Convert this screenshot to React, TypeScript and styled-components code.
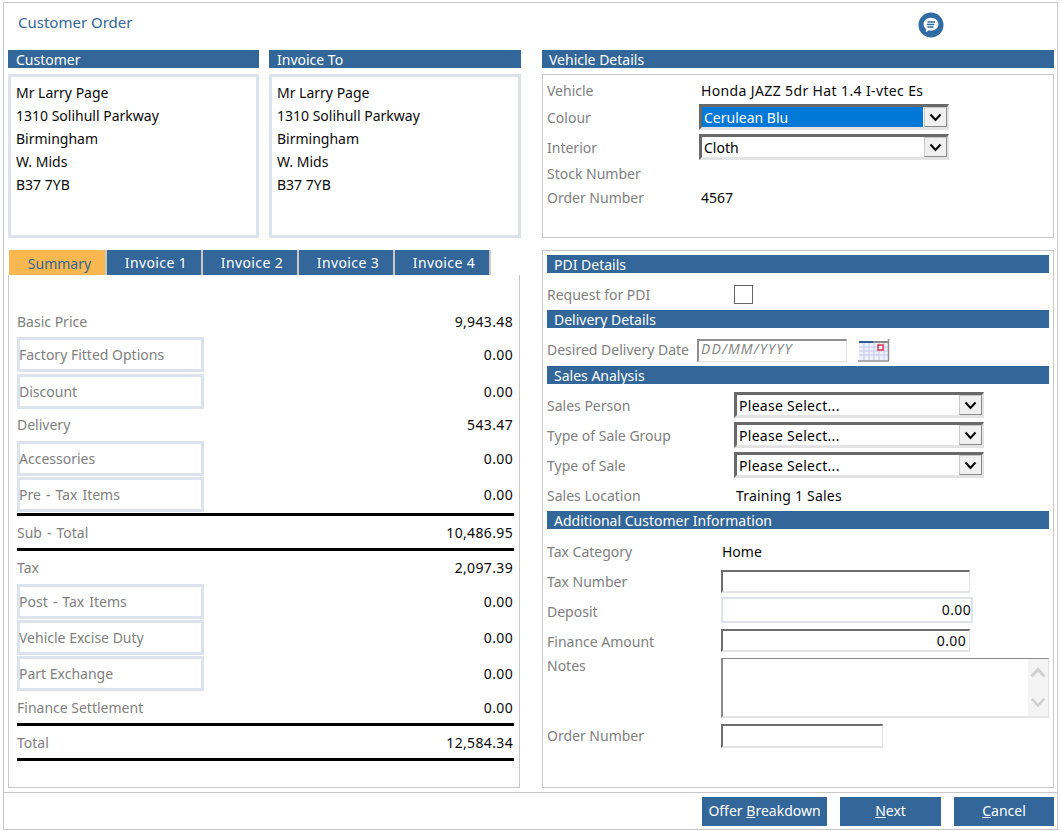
import React from "react";
import styled, { createGlobalStyle } from "styled-components";

const FONT = `"Noto Sans", "Open Sans", sans-serif`;
const BLUE = "#336699";
const LINE = "#c8c8c8";
const SOFT = "#dde3ee";
const INK = "#0a0a0a";
const MUTED = "#808080";

const Global = createGlobalStyle`
  html, body { margin: 0; padding: 0; background: #fff; }
  body { font-family: ${FONT}; font-size: 14px; color: ${INK}; }
`;

const Frame = styled.div`
  box-sizing: border-box;
  width: 1055px;
  height: 828px;
  margin: 2px 0 0 3px;
  border: 1px solid ${LINE};
  display: flex;
  flex-direction: column;
`;
const Header = styled.header`
  height: 47px;
  flex: none;
  display: flex;
  justify-content: space-between;
  padding: 9px 113px 0 14px;
  box-sizing: border-box;
`;
const Title = styled.h1`
  margin: 0;
  font-size: 15px;
  font-weight: 400;
  line-height: 20px;
  color: ${BLUE};
`;
const ChatIcon = styled.svg`
  width: 26px;
  height: 26px;
`;
const Main = styled.main`
  display: grid;
  grid-template-columns: 513px 512px;
  grid-template-rows: 188px 538px;
  column-gap: 21px;
  row-gap: 12px;
  padding-left: 4px;
`;
const AddressPair = styled.div`
  display: grid;
  grid-template-columns: 251px 252px;
  column-gap: 10px;
`;
const Bar = styled.div<{ $pad?: number }>`
  height: 18px;
  line-height: 20px;
  background: ${BLUE};
  color: #fff;
  padding-left: ${(p) => p.$pad ?? 7}px;
  font-size: 14px;
`;
const AddressBox = styled.div`
  box-sizing: border-box;
  height: 164px;
  margin-top: 6px;
  border: 3px solid ${SOFT};
  padding: 4px 5px;
  line-height: 23px;
`;
const Panel = styled.div`
  box-sizing: border-box;
  height: 164px;
  margin-top: 6px;
  border: 1px solid ${LINE};
  padding: 3px 4px 0;
`;
const Row = styled.div<{ $h: number; $mt?: number; $top?: boolean }>`
  display: flex;
  align-items: ${(p) => (p.$top ? "flex-start" : "center")};
  height: ${(p) => p.$h}px;
  margin-top: ${(p) => p.$mt ?? 0}px;
`;
const Label = styled.span<{ $col: number; $low?: boolean; $high?: boolean; $tight?: boolean }>`
  box-sizing: border-box;
  width: ${(p) => p.$col}px;
  flex: none;
  color: ${MUTED};
  white-space: nowrap;
  line-height: ${(p) => (p.$tight ? "15px" : "normal")};
  padding-top: ${(p) => (p.$low ? 2 : 0)}px;
  padding-bottom: ${(p) => (p.$high ? 2 : 0)}px;
`;
const Value = styled.span<{ $pad?: number; $track?: number; $raise?: boolean }>`
  padding-left: ${(p) => p.$pad ?? 0}px;
  padding-bottom: ${(p) => (p.$raise ? 2 : 0)}px;
  letter-spacing: ${(p) => p.$track ?? 0}px;
  white-space: nowrap;
`;
const SelectBox = styled.div<{ $w: number }>`
  box-sizing: border-box;
  width: ${(p) => p.$w}px;
  height: 26px;
  display: flex;
  align-items: stretch;
  border-style: solid;
  border-width: 3px 2px 3px 3px;
  border-color: #696969 #e3e3e3 #e3e3e3 #696969;
`;
const SelectText = styled.span<{ $on?: boolean; $track?: number }>`
  flex: 1;
  line-height: 22px;
  height: 20px;
  padding-left: 2px;
  margin: 0 1px 0 0;
  letter-spacing: ${(p) => p.$track ?? 0}px;
  background: ${(p) => (p.$on ? "#0078d7" : "#fff")};
  color: ${(p) => (p.$on ? "#fff" : "#000")};
`;
const SelectArrow = styled.span`
  box-sizing: border-box;
  width: 23px;
  flex: none;
  display: flex;
  align-items: center;
  justify-content: center;
  background: #f0f0f0;
  border: 1px solid #8a8a8a;
  border-top-color: #c8c8c8;
  border-left-color: #c8c8c8;
`;
const Tabs = styled.nav`
  height: 25px;
  display: flex;
  margin-left: 1px;
`;
const Tab = styled.div<{ $active?: boolean }>`
  box-sizing: border-box;
  width: ${(p) => (p.$active ? 98 : 96)}px;
  padding-left: ${(p) => (p.$active ? 5 : 4)}px;
  border-right: 2px solid ${LINE};
  background-clip: padding-box;
  background-color: ${(p) => (p.$active ? "#f9b84f" : BLUE)};
  color: ${(p) => (p.$active ? BLUE : "#fff")};
  text-align: center;
  letter-spacing: ${(p) => (p.$active ? 0 : 0.4)}px;
  line-height: ${(p) => (p.$active ? 27 : 25)}px;
`;
const SummaryPanel = styled.section`
  box-sizing: border-box;
  width: 512px;
  height: 513px;
  border: 1px solid ${LINE};
  border-top: 0;
  padding: 35px 5px 0 8px;
`;
const SumRow = styled.div<{ $h: number; $pb?: number }>`
  box-sizing: border-box;
  height: ${(p) => p.$h}px;
  padding-bottom: ${(p) => p.$pb ?? 0}px;
  display: flex;
  justify-content: space-between;
  align-items: center;
`;
const SumLabel = styled.span<{ $wide?: boolean }>`
  color: ${MUTED};
  word-spacing: ${(p) => (p.$wide ? 1.4 : 0)}px;
`;
const SumBox = styled.span<{ $wide?: boolean }>`
  box-sizing: border-box;
  align-self: flex-start;
  width: 187px;
  height: 35px;
  border: 3px solid ${SOFT};
  color: ${MUTED};
  line-height: 30px;
  text-indent: -1px;
  word-spacing: ${(p) => (p.$wide ? 1.4 : 0)}px;
  white-space: nowrap;
`;
const SumValue = styled.span`
  padding-right: 1px;
  letter-spacing: 0.35px;
`;
const Rule = styled.div`
  height: 3px;
  background: #000;
`;
const DetailPanel = styled.section`
  box-sizing: border-box;
  height: 538px;
  border: 1px solid ${LINE};
  padding: 4px 4px 0;
`;
const CheckBox = styled.span`
  box-sizing: border-box;
  width: 19px;
  height: 19px;
  border: 1px solid #666;
  background: #fff;
`;
const DateField = styled.span`
  box-sizing: border-box;
  width: 150px;
  height: 23px;
  border-style: solid;
  border-width: 2px 1px 1px 2px;
  border-color: #8f8f8f #e0e0e0 #e0e0e0 #8f8f8f;
  padding-left: 2px;
  line-height: 16px;
  font-style: italic;
  letter-spacing: 1.1px;
  color: #8a8a8a;
  white-space: nowrap;
`;
const CalendarIcon = styled.svg`
  width: 32px;
  height: 23px;
  margin-left: 11px;
`;
const Input = styled.div<{ $w: number; $soft?: boolean; $h?: number; $pr?: number }>`
  box-sizing: border-box;
  width: ${(p) => p.$w}px;
  height: ${(p) => p.$h ?? 23}px;
  border-style: solid;
  border-width: ${(p) => (p.$soft ? "2px" : "2px 1px 2px 2px")};
  border-color: ${(p) => (p.$soft ? SOFT : "#6e6e6e #e3e3e3 #e3e3e3 #6e6e6e")};
  padding-right: ${(p) => p.$pr ?? 0}px;
  text-align: right;
  letter-spacing: 0.35px;
  line-height: ${(p) => (p.$h ?? 23) - 4}px;
`;
const TextArea = styled.div`
  box-sizing: border-box;
  width: 328px;
  height: 60px;
  display: flex;
  justify-content: flex-end;
  border-style: solid;
  border-width: 1px 1px 2px 2px;
  border-color: #8a8a8a #e0e0e0 #e3e3e3 #8a8a8a;
`;
const ScrollStrip = styled.div`
  width: 20px;
  display: flex;
  flex-direction: column;
  align-items: center;
  justify-content: space-between;
  padding: 8px 0 8px;
  background: #f4f4f4;
  box-sizing: border-box;
`;
const Footer = styled.footer`
  flex: none;
  box-sizing: border-box;
  height: 37px;
  margin-top: 4px;
  border-top: 1px solid ${LINE};
  display: flex;
  justify-content: flex-end;
  align-items: flex-start;
  gap: 13px;
  padding: 4px 3px 0 0;
`;
const Button = styled.button<{ $w: number }>`
  width: ${(p) => p.$w}px;
  height: 29px;
  padding: 0 0 2px;
  border: 0;
  background: ${BLUE};
  color: #fff;
  font: inherit;
`;

const Chevron = ({ color = "#000", w = 13, h = 9 }: { color?: string; w?: number; h?: number }) => (
  <svg width={w} height={h} viewBox="0 0 13 9">
    <path d="M1.5 1.5 6.5 7 11.5 1.5" fill="none" stroke={color} strokeWidth="2" />
  </svg>
);

const Select = ({ w, text, on, track }: { w: number; text: string; on?: boolean; track?: number }) => (
  <SelectBox $w={w}>
    <SelectText $on={on} $track={track}>
      {text}
    </SelectText>
    <SelectArrow>
      <Chevron />
    </SelectArrow>
  </SelectBox>
);

const address = ["Mr Larry Page", "1310 Solihull Parkway", "Birmingham", "W. Mids", "B37 7YB"];

type S = { label: string; value: string; boxed?: boolean; h: number; pb?: number };
const block1: S[] = [
  { label: "Basic Price", value: "9,943.48", h: 27, pb: 5 },
  { label: "Factory Fitted Options", value: "0.00", boxed: true, h: 37, pb: 3 },
  { label: "Discount", value: "0.00", boxed: true, h: 35, pb: 0 },
  { label: "Delivery", value: "543.47", h: 32, pb: 2 },
  { label: "Accessories", value: "0.00", boxed: true, h: 36, pb: 2 },
  { label: "Pre - Tax Items", value: "0.00", boxed: true, h: 36, pb: 2 },
];
const block2: S[] = [
  { label: "Tax", value: "2,097.39", h: 33 },
  { label: "Post - Tax Items", value: "0.00", boxed: true, h: 36, pb: 2 },
  { label: "Vehicle Excise Duty", value: "0.00", boxed: true, h: 36, pb: 2 },
  { label: "Part Exchange", value: "0.00", boxed: true, h: 36, pb: 2 },
  { label: "Finance Settlement", value: "0.00", h: 31 },
];

const SummaryRows = ({ rows }: { rows: S[] }) => (
  <>
    {rows.map((r) => (
      <SumRow key={r.label} $h={r.h} $pb={r.pb}>
        {r.boxed ? <SumBox $wide={r.label.includes(" - ")}>{r.label}</SumBox> : <SumLabel>{r.label}</SumLabel>}
        <SumValue>{r.value}</SumValue>
      </SumRow>
    ))}
  </>
);

export default function App() {
  return (
    <>
      <Global />
      <Frame>
        <Header>
          <Title>Customer Order</Title>
          <ChatIcon viewBox="0 0 26 26">
            <circle cx="13" cy="13" r="12.5" fill="#2f6ca3" />
            <path
              d="M13 5.8c-4.3 0-7.4 2.8-7.4 6.4 0 2 1 3.7 2.6 4.9l-.5 3.1 3.3-1.9c.6.1 1.3.2 2 .2 4.3 0 7.4-2.8 7.4-6.3S17.300 5.800 13 5.800z"
              fill="#fff"
            />
            <path d="M9.500 10h7.500M8.800 12.500h7.500M9.500 15h6" stroke="#2f6ca3" strokeWidth="1.500" fill="none" />
          </ChatIcon>
        </Header>
        <Main>
          <AddressPair>
            <div>
              <Bar $pad={8}>Customer</Bar>
              <AddressBox>
                {address.map((l) => (
                  <div key={l}>{l}</div>
                ))}
              </AddressBox>
            </div>
            <div>
              <Bar $pad={8}>Invoice To</Bar>
              <AddressBox>
                {address.map((l) => (
                  <div key={l}>{l}</div>
                ))}
              </AddressBox>
            </div>
          </AddressPair>
          <div>
            <Bar>Vehicle Details</Bar>
            <Panel>
              <Row $h={24}>
                <Label $col={152}>Vehicle</Label>
                <Value $pad={2} $track={0.37}>
                  Honda JAZZ 5dr Hat 1.4 I-vtec Es
                </Value>
              </Row>
              <Row $h={26} $mt={2}>
                <Label $col={152}>Colour</Label>
                <Select w={250} text="Cerulean Blu" on />
              </Row>
              <Row $h={26} $mt={4}>
                <Label $col={152}>Interior</Label>
                <Select w={250} text="Cloth" />
              </Row>
              <Row $h={24} $mt={1}>
                <Label $col={152}>Stock Number</Label>
              </Row>
              <Row $h={24}>
                <Label $col={152}>Order Number</Label>
                <Value $pad={2}>4567</Value>
              </Row>
            </Panel>
          </div>
          <div>
            <Tabs>
              <Tab $active>Summary</Tab>
              <Tab>Invoice 1</Tab>
              <Tab>Invoice 2</Tab>
              <Tab>Invoice 3</Tab>
              <Tab>Invoice 4</Tab>
            </Tabs>
            <SummaryPanel>
              <SummaryRows rows={block1} />
              <Rule />
              <SumRow $h={32}>
                <SumLabel $wide>Sub - Total</SumLabel>
                <SumValue>10,486.95</SumValue>
              </SumRow>
              <Rule />
              <SummaryRows rows={block2} />
              <Rule />
              <SumRow $h={32}>
                <SumLabel>Total</SumLabel>
                <SumValue>12,584.34</SumValue>
              </SumRow>
              <Rule />
            </SummaryPanel>
          </div>
          <DetailPanel>
            <Bar>PDI Details</Bar>
            <Row $h={32} $mt={5}>
              <Label $col={187}>Request for PDI</Label>
              <CheckBox />
            </Row>
            <Bar>Delivery Details</Bar>
            <Row $h={32} $mt={6}>
              <Label $col={150} $high>
                Desired Delivery Date
              </Label>
              <DateField>DD/MM/YYYY</DateField>
              <CalendarIcon viewBox="0 0 32 23">
                <rect x="1" y="2" width="29" height="19" fill="#eef1fa" />
                <rect x="1" y="2" width="14" height="2" fill="#2b5c9e" />
                <rect x="15" y="2" width="15" height="2" fill="#8a8a8a" />
                <path
                  d="M1 8h29M1 12h29M1 16h29M6 4v17M11 4v17M16 4v17M21 4v17M26 4v17"
                  stroke="#c3cbe6"
                  strokeWidth="1"
                  fill="none"
                />
                <rect x="20" y="6" width="5" height="5" fill="#fff" stroke="#d8344c" strokeWidth="1.500" />
                <path d="M30.500 0v22M0 22h31" stroke="#8f8f8f" strokeWidth="1.500" fill="none" />
              </CalendarIcon>
            </Row>
            <Bar>Sales Analysis</Bar>
            <Row $h={26} $mt={8}>
              <Label $col={187}>Sales Person</Label>
              <Select w={250} text="Please Select..." track={0.28} />
            </Row>
            <Row $h={26} $mt={4}>
              <Label $col={187}>Type of Sale Group</Label>
              <Select w={250} text="Please Select..." track={0.28} />
            </Row>
            <Row $h={26} $mt={4}>
              <Label $col={187}>Type of Sale</Label>
              <Select w={250} text="Please Select..." track={0.28} />
            </Row>
            <Row $h={30} $mt={3}>
              <Label $col={189} $high>
                Sales Location
              </Label>
              <Value $track={0.2} $raise>
                Training 1 Sales
              </Value>
            </Row>
            <Bar>Additional Customer Information</Bar>
            <Row $h={36} $mt={5}>
              <Label $col={175} $high>
                Tax Category
              </Label>
              <Value $raise>Home</Value>
            </Row>
            <Row $h={23}>
              <Label $col={174}>Tax Number</Label>
              <Input $w={249} />
            </Row>
            <Row $h={26} $mt={4}>
              <Label $col={174} $low>
                Deposit
              </Label>
              <Input $w={252} $h={26} $soft>
                0.00
              </Input>
            </Row>
            <Row $h={23} $mt={6}>
              <Label $col={174} $low>
                Finance Amount
              </Label>
              <Input $w={249} $pr={3}>
                0.00
              </Input>
            </Row>
            <Row $h={60} $mt={6} $top>
              <Label $col={174} $tight>
                Notes
              </Label>
              <TextArea>
                <ScrollStrip>
                  <svg width="16" height="11" viewBox="0 0 16 11">
                    <path d="M1.500 9.500 8 2.500l6.500 7" fill="none" stroke="#cfcfcf" strokeWidth="3" />
                  </svg>
                  <Chevron color="#cfcfcf" w={16} h={11} />
                </ScrollStrip>
              </TextArea>
            </Row>
            <Row $h={24} $mt={6}>
              <Label $col={174} $high>
                Order Number
              </Label>
              <Input $w={162} $h={24} />
            </Row>
          </DetailPanel>
        </Main>
        <Footer>
          <Button $w={125}>
            Offer <u>B</u>reakdown
          </Button>
          <Button $w={101}>
            <u>N</u>ext
          </Button>
          <Button $w={100}>
            <u>C</u>ancel
          </Button>
        </Footer>
      </Frame>
    </>
  );
}
